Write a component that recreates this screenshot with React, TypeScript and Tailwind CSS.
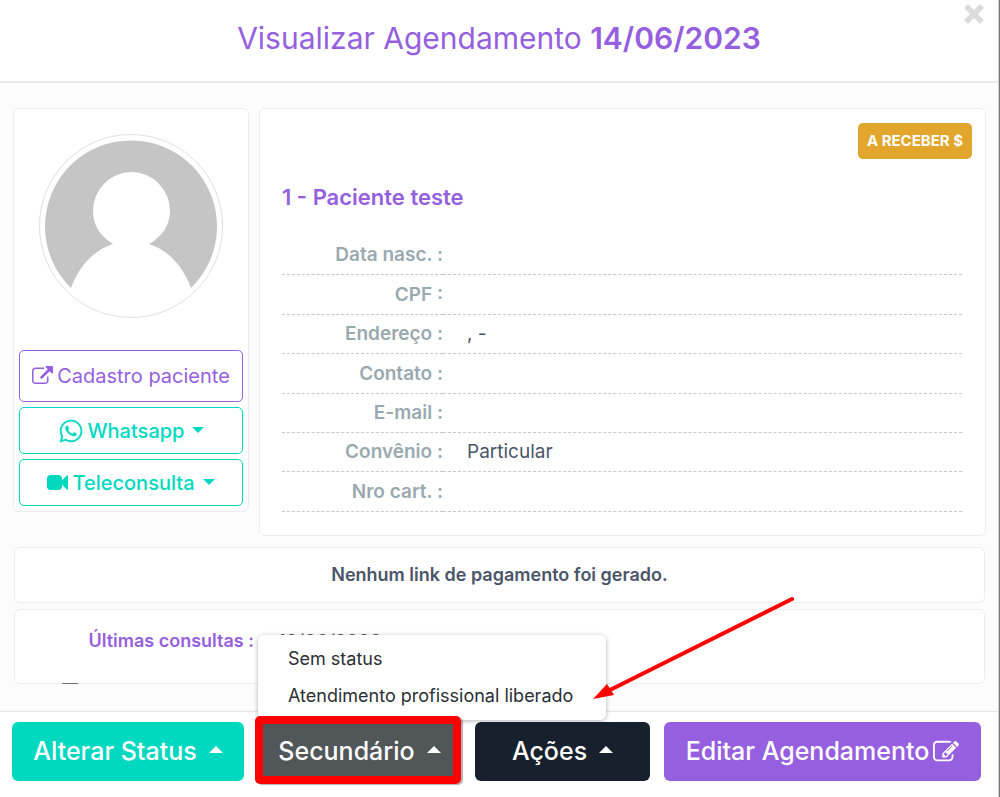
import { FaWhatsapp } from "react-icons/fa";
import type { ReactNode } from "react";

const fields = [
  { label: "Data nasc. :", value: "" },
  { label: "CPF :", value: "" },
  { label: "Endereço :", value: ", -" },
  { label: "Contato :", value: "" },
  { label: "E-mail :", value: "" },
  { label: "Convênio :", value: "Particular" },
  { label: "Nro cart. :", value: "" },
];

function Glyph({ d, className }: { d: string; className: string }) {
  return (
    <svg viewBox="0 0 1792 1792" className={className} fill="currentColor" aria-hidden="true">
      <path d={d} />
    </svg>
  );
}

const externalLink =
  "M1408 928v320q0 119-84.5 203.5t-203.5 84.5h-832q-119 0-203.5-84.5t-84.5-203.5v-832q0-119 84.5-203.5t203.5-84.5h704q14 0 23 9t9 23v64q0 14-9 23t-23 9h-704q-66 0-113 47t-47 113v832q0 66 47 113t113 47h832q66 0 113-47t47-113v-320q0-14 9-23t23-9h64q14 0 23 9t9 23zm384-864v512q0 26-19 45t-45 19-45-19l-176-176-652 652q-10 10-23 10t-23-10l-114-114q-10-10-10-23t10-23l652-652-176-176q-19-19-19-45t19-45 45-19h512q26 0 45 19t19 45z";
const videoCamera =
  "M1792 352v1088q0 42-39 59-13 5-25 5-27 0-45-19l-403-403v166q0 119-84.5 203.5t-203.5 84.5h-704q-119 0-203.5-84.5t-84.5-203.5v-704q0-119 84.5-203.5t203.5-84.5h704q119 0 203.5 84.5t84.5 203.5v165l403-402q18-19 45-19 12 0 25 5 39 17 39 59z";
const pencilSquare =
  "M888 1184l116-116-152-152-116 116v56h96v96h56zm440-720q-16-16-33 1l-350 350q-17 17-1 33t33-1l350-350q17-17 1-33zm80 594v190q0 119-84.5 203.5t-203.5 84.5h-832q-119 0-203.5-84.5t-84.5-203.5v-832q0-119 84.5-203.5t203.5-84.5h832q63 0 117 25 15 7 18 23 3 17-9 29l-49 49q-14 14-32 8-23-6-45-6h-832q-66 0-113 47t-47 113v832q0 66 47 113t113 47h832q66 0 113-47t47-113v-126q0-13 9-22l64-64q15-15 35-7t20 29zm-96-738l288 288-672 672h-288v-288zm444 132l-92 92-288-288 92-92q28-28 68-28t68 28l152 152q28 28 28 68t-28 68z";

function Caret({ up = false, className }: { up?: boolean; className: string }) {
  return (
    <svg viewBox="0 0 12 6" className={className} fill="currentColor" aria-hidden="true">
      <path d={up ? "M0 6L6 0L12 6Z" : "M0 0H12L6 6Z"} />
    </svg>
  );
}

function FooterButton({ className, children }: { className: string; children: ReactNode }) {
  return (
    <button
      type="button"
      className={`flex h-[59px] w-full items-center justify-center rounded-md text-[25px] font-medium whitespace-nowrap text-white ${className}`}
    >
      {children}
    </button>
  );
}

export default function App() {
  return (
    <div className="flex min-h-screen flex-col border-r border-[#777777] bg-[#fcfcfc] font-['Inter','Liberation_Sans',sans-serif] text-lg text-[#4b5569]">
      <div className="flex flex-1 flex-col border-r border-[#d4d4d4]">
        <header className="relative flex h-[83px] items-center justify-center border-b-2 border-[#e6ebef] bg-white pb-1">
          <h1 className="text-[30px] whitespace-nowrap text-[#955fe0]">
            Visualizar Agendamento <strong className="font-semibold">14/06/2023</strong>
          </h1>
          <button type="button" aria-label="Fechar" className="absolute top-1 right-[14px] text-[#dcdcdc]">
            <svg viewBox="0 0 20 20" className="size-5" stroke="currentColor" strokeWidth="5.500" aria-hidden="true">
              <path d="M2 2L18 18M18 2L2 18" />
            </svg>
          </button>
        </header>

        <main className="flex-1 pt-[25px] pr-3 pl-[13px]">
          <div className="flex items-start gap-[10px]">
            <section className="flex w-[236px] shrink-0 flex-col gap-[5px] rounded-md border border-[#ededed] bg-white p-[5px]">
              <div className="mx-auto mt-5 mb-[27px] size-[184px] rounded-full border border-[#dee0e8] p-[5px]">
                <svg viewBox="0 0 172 172" className="size-full" role="img" aria-label="Foto do paciente">
                  <path
                    fill="#c5c5c5"
                    d="M26 148A86 86 0 1 1 146 148C138 126 123 110 104 104C117 97 125 85 125 71A38.500 39 0 1 0 48 71C48 85 55 96 68 104C49 110 34 126 26 148Z"
                  />
                </svg>
              </div>
              <a
                href="#cadastro"
                className="flex h-[52px] items-center justify-center gap-1 rounded-[5px] border border-[#955fe0] text-xl whitespace-nowrap text-[#955fe0]"
              >
                <Glyph d={externalLink} className="size-[21px]" />
                Cadastro paciente
              </a>
              <button
                type="button"
                className="flex h-[47px] items-center justify-center gap-1 rounded-[5px] border border-[#00d9c0] text-xl font-medium text-[#00d9c0]"
              >
                <FaWhatsapp className="size-[26px]" />
                Whatsapp
                <Caret className="mb-[2px] ml-1 h-[6px] w-3" />
              </button>
              <button
                type="button"
                className="flex h-[47px] items-center justify-center gap-1 rounded-[5px] border border-[#00d9c0] text-xl font-medium text-[#00d9c0]"
              >
                <Glyph d={videoCamera} className="size-[21px]" />
                Teleconsulta
                <Caret className="mb-[2px] ml-1 h-[6px] w-3" />
              </button>
            </section>

            <section className="flex min-w-0 flex-1 flex-col rounded-md border border-[#ededed] bg-white px-[13px] pt-[14px] pb-[23px]">
              <button
                type="button"
                className="flex h-9 w-[114px] items-center justify-center self-end rounded-[5px] bg-[#e2a62d] text-[15px] font-bold whitespace-nowrap text-white"
              >
                A RECEBER $
              </button>
              <div className="pr-[10px] pl-[9px]">
                <h2 className="mt-[23px] mb-6 text-[22px] leading-[30px] font-semibold text-[#955fe0]">
                  1 - Paciente teste
                </h2>
                <table className="h-[276px] w-full">
                  <tbody>
                    {fields.map((field) => (
                      <tr key={field.label} className="border-b border-dashed border-[#c8c8c8]">
                        <th scope="row" className="w-[161px] text-right text-[19px] font-semibold text-[#9aa9b0]">
                          {field.label}
                        </th>
                        <td className="pl-6 text-[19px]">{field.value}</td>
                      </tr>
                    ))}
                  </tbody>
                </table>
              </div>
            </section>
          </div>

          <div className="mt-[11px] flex flex-col gap-[6px] px-px">
            <section className="flex h-14 items-center justify-center rounded-md border border-[#ededed] bg-white">
              <p className="font-semibold">Nenhum link de pagamento foi gerado.</p>
            </section>
            <section className="relative flex h-[75px] gap-6 rounded-md border border-[#ededed] bg-white pt-[17px]">
              <h3 className="w-[239px] text-right font-semibold text-[#955fe0]">Últimas consultas :</h3>
              <p className="text-[19px]">12/06/2023</p>
              <span className="absolute -bottom-px left-[47px] h-px w-4 bg-[#6f6d66]" />
            </section>
          </div>
        </main>

        <footer className="flex h-[86px] gap-[14px] border-t border-[#e6e6e6] bg-white pt-[10px] pr-[17px] pl-3">
          <div className="w-[232px]">
            <FooterButton className="gap-3 bg-[#00d9c0]">
              Alterar Status
              <Caret up className="mb-1 h-[7px] w-[14px]" />
            </FooterButton>
          </div>
          <div className="relative w-[203px]">
            <FooterButton className="gap-3 bg-[#515759]">
              Secundário
              <Caret up className="mb-1 h-[7px] w-[14px]" />
            </FooterButton>
            <ul className="absolute bottom-full left-0 mb-[2px] w-[348px] rounded-md bg-white pt-[5px] pb-[6px] text-lg text-[#2b2f35] shadow-[0_1px_5px_rgba(0,0,0,0.3)]">
              <li>
                <button type="button" className="h-[37px] w-full px-[30px] text-left">
                  Sem status
                </button>
              </li>
              <li>
                <button type="button" className="h-[37px] w-full px-[30px] text-left whitespace-nowrap">
                  Atendimento profissional liberado
                </button>
              </li>
            </ul>
            <span className="pointer-events-none absolute -top-[6px] right-0 -left-[3px] h-[68px] rounded-[5px] border-8 border-[#ff0000] shadow-[2px_1px_1px_rgba(0,0,0,0.3)]" />
            <svg
              viewBox="0 0 204 104"
              className="pointer-events-none absolute bottom-[97px] left-[334px] h-[104px] w-[204px]"
              aria-hidden="true"
            >
              <path d="M200 3L14 96" stroke="#ff0000" strokeWidth="4" strokeLinecap="round" />
              <path d="M1 103L15 88L22 99Z" fill="#ff0000" />
            </svg>
          </div>
          <div className="w-[175px]">
            <FooterButton className="gap-3 bg-[#17212d]">
              Ações
              <Caret up className="mb-1 h-[7px] w-[14px]" />
            </FooterButton>
          </div>
          <div className="min-w-0 flex-1">
            <FooterButton className="gap-1 bg-[#955fe0]">
              Editar Agendamento
              <Glyph d={pencilSquare} className="size-[26px]" />
            </FooterButton>
          </div>
        </footer>
      </div>
    </div>
  );
}
